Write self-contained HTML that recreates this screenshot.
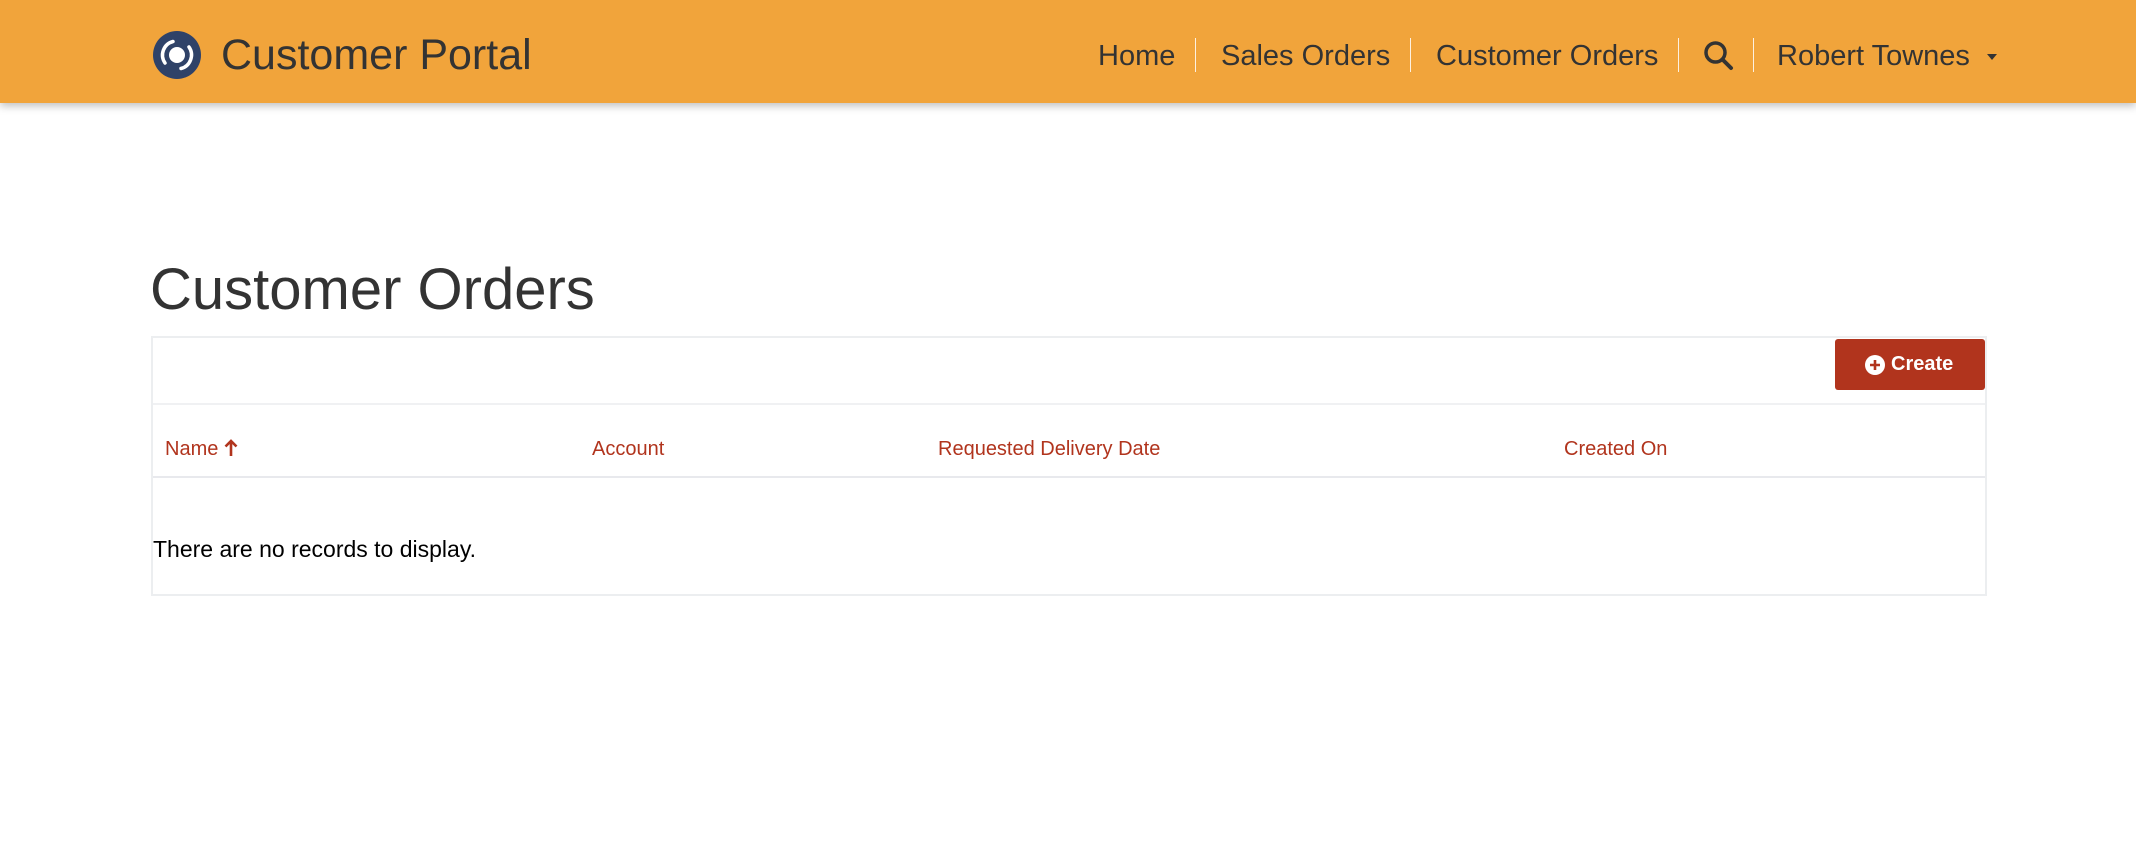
<!DOCTYPE html>
<html><head><meta charset="utf-8"><style>
*{margin:0;padding:0;box-sizing:border-box}
body{width:2136px;height:861px;background:#fff;font-family:"Liberation Sans",Arial,sans-serif;position:relative;overflow:hidden;color:#333}
.hdr{position:absolute;left:0;top:0;width:2136px;height:103px;background:#f1a43b;box-shadow:0 3px 8px rgba(0,0,0,.25)}
.abs{position:absolute;white-space:nowrap}
.nav{font-size:29px;color:#333;top:39px;line-height:34px}
.sep{position:absolute;top:38px;width:1px;height:34px;background:#fff;opacity:.85}
.panel{position:absolute;left:151px;top:336px;width:1836px;height:260px;border:2px solid #eceef0}
.th{font-size:20px;color:#b1341d;top:437px;line-height:24px}
</style></head><body>
<div class="hdr">
<svg class="abs" style="left:153px;top:31px" width="48" height="48" viewBox="0 0 48 48">
<circle cx="24" cy="24" r="24" fill="#2f4268"/>
<circle cx="24" cy="24" r="8" fill="#fff"/>
<path d="M12 32 A14 14 0 0 1 20 10.5" fill="none" stroke="#fff" stroke-width="3.5" stroke-linecap="round"/>
<path d="M36 16 A14 14 0 0 1 28 37.5" fill="none" stroke="#fff" stroke-width="3.5" stroke-linecap="round"/>
</svg>
<div class="abs" style="left:221px;top:30px;font-size:43px;line-height:50px;color:#333">Customer Portal</div>
<div class="abs nav" style="left:1098px">Home</div>
<div class="sep" style="left:1195px"></div>
<div class="abs nav" style="left:1221px">Sales Orders</div>
<div class="sep" style="left:1410px"></div>
<div class="abs nav" style="left:1436px">Customer Orders</div>
<div class="sep" style="left:1678px"></div>
<svg class="abs" style="left:1703px;top:40px" width="31" height="31" viewBox="0 0 31 31"><circle cx="12.5" cy="12.5" r="9.5" fill="none" stroke="#333" stroke-width="3.5"/><path d="M19.5 19.5 L28 28" stroke="#333" stroke-width="4" stroke-linecap="round"/></svg>
<div class="sep" style="left:1753px"></div>
<div class="abs nav" style="left:1777px">Robert Townes</div>
<div class="abs" style="left:1987px;top:54px;width:0;height:0;border-left:5px solid transparent;border-right:5px solid transparent;border-top:6px solid #333"></div>
</div>
<div class="abs" style="left:150px;top:255px;font-size:58px;line-height:70px;color:#333">Customer Orders</div>
<div class="panel"></div>
<div class="abs" style="left:153px;top:403px;width:1832px;height:2px;background:#f0f1f3"></div>
<div class="abs" style="left:153px;top:476px;width:1832px;height:2px;background:#e8e9ed"></div>
<div class="abs" style="left:1835px;top:339px;width:150px;height:51px;background:#b1341d;border-radius:3px;color:#fff;font-weight:bold;font-size:20px;line-height:51px">
<svg style="position:absolute;left:30px;top:16px" width="20" height="20" viewBox="0 0 20 20"><circle cx="10" cy="10" r="10" fill="#fff"/><path d="M10 5V15M5 10H15" stroke="#b1341d" stroke-width="2.6"/></svg>
<span style="position:absolute;left:56px">Create</span></div>
<div class="abs th" style="left:165px">Name <svg style="vertical-align:-2px" width="14" height="18" viewBox="0 0 14 18"><path d="M7 17V2M1.5 7.5L7 2l5.5 5.5" fill="none" stroke="#b1341d" stroke-width="2.6"/></svg></div>
<div class="abs th" style="left:592px">Account</div>
<div class="abs th" style="left:938px">Requested Delivery Date</div>
<div class="abs th" style="left:1564px">Created On</div>
<div class="abs" style="left:153px;top:535px;font-size:23px;line-height:28px;color:#000">There are no records to display.</div>
</body></html>
